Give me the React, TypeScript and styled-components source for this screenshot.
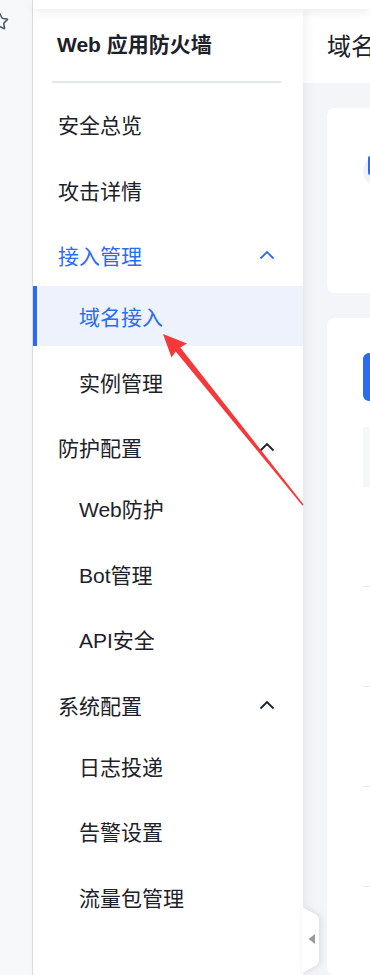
import React from "react";
import styled, { createGlobalStyle, css } from "styled-components";
import { Star } from "lucide-react";

const GlobalStyle = createGlobalStyle`
  html, body {
    margin: 0;
    padding: 0;
    background: #ffffff;
  }
  body {
    font-family: "Liberation Sans", "Noto Sans CJK SC", sans-serif;
  }
`;

const Page = styled.div`
  position: relative;
  display: flex;
  width: 370px;
  height: 975px;
  overflow: hidden;
  background: #ffffff;
`;

const Rail = styled.div`
  flex-shrink: 0;
  width: 32px;
  background: #f7f8fa;
  border-right: 1px solid #dcdee2;
  overflow: hidden;
`;

const RailIcon = styled.div`
  margin: 12px 0 0 -10px;
  width: 19px;
  height: 19px;
  color: #4e5969;
`;

const Main = styled.div`
  flex: 1;
  display: flex;
  flex-direction: column;
  min-width: 0;
`;

const TopBar = styled.div`
  position: relative;
  z-index: 3;
  height: 9px;
  background: #ffffff;
  box-shadow: 0 3px 10px rgba(0, 0, 0, 0.08);
`;

const Body = styled.div`
  flex: 1;
  display: flex;
  min-height: 0;
`;

const Sidebar = styled.aside`
  position: relative;
  z-index: 2;
  flex-shrink: 0;
  width: 270px;
  display: flex;
  flex-direction: column;
  background: #ffffff;
  box-shadow: 3px 0 10px rgba(0, 0, 0, 0.06);
`;

const SideTitle = styled.div`
  height: 72px;
  box-sizing: border-box;
  padding: 0 0 5px 24px;
  display: flex;
  align-items: center;
  font-size: 21px;
  font-weight: 700;
  color: #1d2129;
`;

const Divider = styled.div`
  height: 2px;
  margin: 0 22px 0 19px;
  background: #e5e6eb;
`;

const Menu = styled.nav`
  margin-top: 11px;
  display: flex;
  flex-direction: column;
  gap: 5.5px;
`;

const SubList = styled.div`
  margin-top: 1px;
  display: flex;
  flex-direction: column;
  gap: 5.5px;
`;

const Item = styled.div<{ $sub?: boolean; $active?: boolean; $open?: boolean }>`
  position: relative;
  height: 60px;
  display: flex;
  align-items: center;
  justify-content: space-between;
  padding: 0 29px 0 ${(p) => (p.$sub ? 46 : 25)}px;
  font-size: 21px;
  color: ${(p) => (p.$active || p.$open ? "#2d6cf0" : "#1d2129")};
  background: ${(p) => (p.$active ? "#edf2fd" : "transparent")};
  ${(p) =>
    p.$active &&
    css`
      &::before {
        content: "";
        position: absolute;
        left: 0;
        top: 0;
        bottom: 0;
        width: 4px;
        background: #2a6af5;
      }
    `}
`;

const Chevron = styled.svg`
  width: 16px;
  height: 10px;
  margin-right: -1px;
`;

const Collapse = styled.div`
  position: absolute;
  right: -17px;
  bottom: 2px;
  width: 18px;
  height: 66px;
  filter: drop-shadow(2px 0 3px rgba(0, 0, 0, 0.1));
`;

const Content = styled.main`
  position: relative;
  z-index: 1;
  flex: 1;
  display: flex;
  flex-direction: column;
  min-width: 0;
  overflow: hidden;
  background: #f4f5f8;
`;

const ContentHead = styled.div`
  flex-shrink: 0;
  height: 74px;
  box-sizing: border-box;
  padding: 0 0 3px 24px;
  display: flex;
  align-items: center;
  background: #ffffff;
  font-size: 24px;
  color: #1d2129;
  white-space: nowrap;
`;

const Card = styled.section<{ $height?: number }>`
  flex-shrink: 0;
  width: 400px;
  margin: 25px 0 0 24px;
  ${(p) => (p.$height ? `height: ${p.$height}px;` : "flex: 1;")}
  padding: 0 0 0 36px;
  box-sizing: border-box;
  background: #ffffff;
  border-radius: 8px;
`;

const StepBadge = styled.div`
  position: relative;
  margin-top: 48px;
  width: 30px;
  height: 30px;
  border-radius: 50%;
  background: #eef3ff;
`;

const StepMark = styled.div`
  margin: 2px 0 0 5px;
  width: 10px;
  height: 19px;
  border-radius: 2px;
  background: #2d6cf0;
`;

const PrimaryButton = styled.div`
  margin-top: 35px;
  width: 120px;
  height: 48px;
  border-radius: 6px;
  background: #2a6bf2;
`;

const TableHead = styled.div`
  margin-top: 26px;
  height: 60px;
  background: #f6f7f9;
`;

const TableRow = styled.div`
  height: 100px;
  box-sizing: border-box;
  border-bottom: 1px solid #e8e9ec;
`;

const ArrowLayer = styled.svg`
  position: absolute;
  left: 0;
  top: 0;
  width: 370px;
  height: 975px;
  pointer-events: none;
  z-index: 10;
`;

type Entry = { label: string; children?: string[] };

const menu: Entry[] = [
  { label: "安全总览" },
  { label: "攻击详情" },
  { label: "接入管理", children: ["域名接入", "实例管理"] },
  { label: "防护配置", children: ["Web防护", "Bot管理", "API安全"] },
  { label: "系统配置", children: ["日志投递", "告警设置", "流量包管理"] },
];

const ACTIVE = "域名接入";

function Up({ color }: { color: string }) {
  return (
    <Chevron viewBox="0 0 16 10">
      <polyline
        points="1.5,8.5 8,2 14.5,8.5"
        fill="none"
        stroke={color}
        strokeWidth="1.8"
      />
    </Chevron>
  );
}

export default function App() {
  return (
    <>
      <GlobalStyle />
      <Page>
        <Rail>
          <RailIcon>
            <Star size={19} strokeWidth={2} />
          </RailIcon>
        </Rail>
        <Main>
          <TopBar />
          <Body>
            <Sidebar>
              <SideTitle>Web 应用防火墙</SideTitle>
              <Divider />
              <Menu>
                {menu.map((entry) => {
                  if (!entry.children) {
                    return <Item key={entry.label}>{entry.label}</Item>;
                  }
                  const open = entry.children.includes(ACTIVE);
                  return (
                    <div key={entry.label}>
                      <Item $open={open}>
                        {entry.label}
                        <Up color={open ? "#2d6cf0" : "#1d2129"} />
                      </Item>
                      <SubList>
                        {entry.children.map((c) => (
                          <Item key={c} $sub $active={c === ACTIVE}>
                            {c}
                          </Item>
                        ))}
                      </SubList>
                    </div>
                  );
                })}
              </Menu>
              <Collapse>
                <svg width="18" height="66" viewBox="0 0 18 66">
                  <path
                    d="M0 0 L13 7 Q17 9 17 13 L17 53 Q17 57 13 59 L0 66 Z"
                    fill="#ffffff"
                  />
                  <polygon points="13,27 13,37 6.5,32" fill="#9a9ca1" />
                </svg>
              </Collapse>
            </Sidebar>
            <Content>
              <ContentHead>域名接入</ContentHead>
              <Card $height={185}>
                <StepBadge>
                  <StepMark />
                </StepBadge>
              </Card>
              <Card>
                <PrimaryButton />
                <TableHead />
                <TableRow />
                <TableRow />
                <TableRow />
                <TableRow />
              </Card>
            </Content>
          </Body>
        </Main>
        <ArrowLayer viewBox="0 0 370 975">
          <polygon
            points="163,334 187,343.5 180.3,347.6 303.6,504.4 302.4,505.6 175.7,351.4 171.5,357.5"
            fill="#f5393a"
          />
        </ArrowLayer>
      </Page>
    </>
  );
}
